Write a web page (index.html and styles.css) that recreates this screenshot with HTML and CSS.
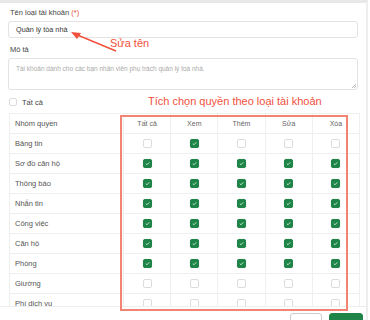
FILE: index.html
```html
<!DOCTYPE html>
<html>
<head>
    <title>Loại tài khoản</title>
    <link rel="stylesheet" href="styles.css">
</head>
<body>
    <div class="modal">
        <div class="modal-body">
            <label class="field-label">Tên loại tài khoản <span class="req">(*)</span></label>
            <div class="input">Quản lý tòa nhà</div>

            <label class="field-label gap">Mô tả</label>
            <div class="textarea">Tài khoản dành cho các bạn nhân viên phụ trách quản lý toà nhà.<span class="grip"></span></div>

            <div class="check-all">
                <span class="box"></span>
                <span>Tất cả</span>
            </div>

            <table class="perm">
                <thead>
                    <tr>
                        <th class="name">Nhóm quyền</th>
                        <th>Tất cả</th>
                        <th>Xem</th>
                        <th>Thêm</th>
                        <th>Sửa</th>
                        <th>Xóa</th>
                    </tr>
                </thead>
                <tbody id="rows"></tbody>
            </table>
        </div>
        <div class="modal-footer">
            <button class="btn">Hủy</button>
            <button class="btn btn-green">Lưu</button>
        </div>

        <!-- annotations -->
        <div class="note note-name">Sửa tên</div>
        <svg class="arrow" width="60" height="30" viewBox="0 0 60 30">
            <line x1="47" y1="22" x2="6" y2="5" stroke="#f0503c" stroke-width="1.4"/>
            <polygon points="2,3 12,4 8,10" fill="#f0503c"/>
        </svg>
        <div class="note note-perm">Tích chọn quyền theo loại tài khoản</div>
        <div class="frame"></div>
    </div>

    <script>
        // quyền theo nhóm: Tất cả, Xem, Thêm, Sửa, Xóa
        const groups = [
            ['Bảng tin', [0, 1, 0, 0, 0]],
            ['Sơ đồ căn hộ', [1, 1, 1, 1, 1]],
            ['Thông báo', [1, 1, 1, 1, 1]],
            ['Nhắn tin', [1, 1, 1, 1, 1]],
            ['Công việc', [1, 1, 1, 1, 1]],
            ['Căn hộ', [1, 1, 1, 1, 1]],
            ['Phòng', [1, 1, 1, 1, 1]],
            ['Giường', [0, 0, 0, 0, 0]],
            ['Phí dịch vụ', [0, 0, 0, 0, 0]]
        ];

        const tbody = document.getElementById('rows');
        groups.forEach(([name, perms]) => {
            const tr = document.createElement('tr');
            let html = `<td class="name">${name}</td>`;
            perms.forEach(p => {
                html += `<td><span class="box${p ? ' on' : ''}"></span></td>`;
            });
            tr.innerHTML = html;
            tbody.appendChild(tr);
        });
    </script>
</body>
</html>
```

FILE: styles.css
```css
body { margin: 0; font-family: "Liberation Sans", Arial, sans-serif; color: #444; background: #fff; }
.modal { position: relative; width: 368px; height: 320px; border-top: 3px solid #e8e8e8; border-right: 2px solid #eee; box-sizing: border-box; overflow: hidden; }
.modal-body { height: 303px; overflow: hidden; padding: 0 8px 0 8px; box-sizing: border-box; }
.field-label { display: block; font-size: 7.5px; line-height: 10px; margin-top: 5px; padding-left: 2px; color: #444; }
.field-label.gap { margin-top: 7px; }
.req { color: #e74c3c; }
.input { margin-top: 3px; height: 17px; border: 1px solid #e3e3e3; border-radius: 3px; box-sizing: border-box; padding: 0 7px; font-size: 7.3px; line-height: 15px; color: #333; }
.textarea { position: relative; margin-top: 3px; height: 32px; border: 1px solid #e3e3e3; border-radius: 3px; box-sizing: border-box; padding: 5px 7px; font-size: 6.5px; line-height: 9px; color: #aaa; }
.grip { position: absolute; right: 1px; bottom: 1px; width: 4px; height: 4px; background: linear-gradient(135deg, transparent 50%, #bbb 50%, #bbb 60%, transparent 60%, transparent 75%, #bbb 75%, #bbb 85%, transparent 85%); }
.check-all { display: flex; align-items: center; gap: 5px; margin-top: 7px; height: 10px; padding-left: 1px; font-size: 7.5px; color: #444; }
.check-all .box { width: 8px; height: 8px; }
.perm { margin-top: 6px; margin-left: 1px; border-collapse: collapse; width: 351px; table-layout: fixed; font-size: 7.5px; color: #555; }
.perm th, .perm td { border: 1px solid #efefef; height: 19px; padding: 0; text-align: center; vertical-align: middle; }
.perm th { font-weight: normal; font-size: 7px; color: #666; }
.perm .name { width: 114px; text-align: left; padding-left: 5px; box-sizing: border-box; }
.perm th.name { font-size: 7.5px; color: #555; }
.box { display: inline-block; width: 9px; height: 9px; border: 1px solid #dcdcdc; border-radius: 2px; box-sizing: border-box; background: #fff; vertical-align: middle; }
.box.on { border-color: #1e8447; background: #1e8447 url("data:image/svg+xml;utf8,<svg xmlns='http://www.w3.org/2000/svg' viewBox='0 0 10 10'><path d='M2.6 5.2 L4.3 6.8 L7.6 3.3' fill='none' stroke='%23d8f5e0' stroke-width='1.2'/></svg>") center / 100% no-repeat; box-shadow: 0 0 1px rgba(0,0,0,0.3); }
.modal-footer { display: flex; justify-content: flex-end; gap: 7px; border-top: 1px solid #eee; padding: 6px 3px 0 0; }
.btn { height: 20px; padding: 0; border-radius: 3px; font-family: inherit; font-size: 7.5px; line-height: 12px; vertical-align: top; text-align: center; padding-top: 2px; box-sizing: border-box; }
.btn { width: 32px; background: #fff; border: 1px solid #ccc; color: #666; }
.btn-green { width: 34px; background: #1e8447; border-color: #1e8447; color: #fff; }
.note { position: absolute; color: #f0503c; font-size: 11px; line-height: 13px; white-space: nowrap; }
.note-name { left: 110px; top: 34px; }
.note-perm { left: 148px; top: 92px; }
.arrow { position: absolute; left: 69px; top: 26px; }
.frame { position: absolute; left: 120px; top: 112px; width: 228px; height: 196px; border: 2px solid #f38473; box-sizing: border-box; }
```
